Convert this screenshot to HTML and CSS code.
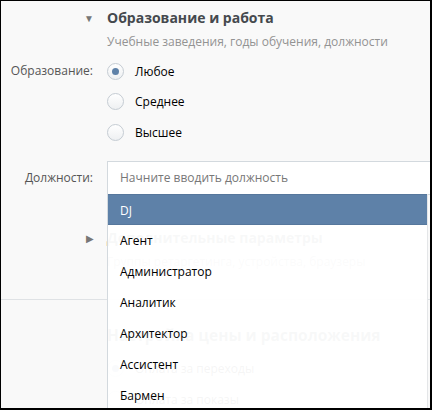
FILE: index.html
```html
<!DOCTYPE html>
<html lang="ru">
<head>
  <meta charset="UTF-8">
  <title>Образование и работа</title>
  <link rel="stylesheet" href="styles.css">
</head>
<body>
  <div class="frame">

    <div class="section">
      <div class="section-head">
        <span class="toggle">&#9660;</span>
        <div>
          <div class="section-title">Образование и работа</div>
          <div class="section-sub">Учебные заведения, годы обучения, должности</div>
        </div>
      </div>

      <div class="row row-first">
        <div class="label">Образование:</div>
        <div class="options">
          <label class="radio checked"><span class="dot"></span>Любое</label>
          <label class="radio"><span class="dot"></span>Среднее</label>
          <label class="radio"><span class="dot"></span>Высшее</label>
        </div>
      </div>

      <div class="row row-input">
        <div class="label">Должности:</div>
        <div class="field">
          <div class="input">Начните вводить должность</div>
          <ul class="dropdown">
            <li class="active">DJ</li>
            <li>Агент</li>
            <li>Администратор</li>
            <li>Аналитик</li>
            <li>Архитектор</li>
            <li>Ассистент</li>
            <li>Бармен</li>
          </ul>
        </div>
      </div>
    </div>

    <div class="section section-closed">
      <div class="section-head">
        <span class="toggle">&#9654;</span>
        <div>
          <div class="section-title">Дополнительные параметры</div>
          <div class="section-sub">Группы ретаргетинга, устройства, браузеры</div>
        </div>
      </div>
    </div>

    <div class="section section-price">
      <div class="section-head">
        <span class="toggle"></span>
        <div class="section-title big">Настройка цены и расположения</div>
      </div>
      <div class="row row-first">
        <div class="label"></div>
        <div class="options">
          <label class="radio checked"><span class="dot"></span>Оплата за переходы</label>
          <label class="radio"><span class="dot"></span>Оплата за показы</label>
        </div>
      </div>
    </div>

  </div>
</body>
</html>
```

FILE: styles.css
```css
* {
  box-sizing: border-box;
  margin: 0;
  padding: 0;
}

body {
  font-family: "Open Sans", Tahoma, sans-serif;
  font-size: 12px;
  color: #000;
  background-color: #fff;
}

.frame {
  width: 432px;
  height: 410px;
  overflow: hidden;
  background-color: #f9f9f9;
  border-top: 1px solid #000;
  border-left: 1px solid #000;
  border-right: 2px solid #000;
  border-bottom: 2px solid #000;
}

.section-head {
  display: flex;
  align-items: flex-start;
  padding-top: 7px;
}

.toggle {
  width: 106px;
  flex-shrink: 0;
  padding-right: 13px;
  text-align: right;
  font-size: 10px;
  line-height: 20px;
  color: #777;
}

.section-title {
  font-size: 14px;
  font-weight: bold;
  line-height: 20px;
  color: #45494e;
}

.section-title.big {
  font-size: 15.5px;
}

.section-sub {
  margin-top: 5px;
  color: #939393;
  line-height: 18px;
}

.row {
  display: flex;
  align-items: flex-start;
}

.row-first {
  margin-top: 5px;
}

.label {
  width: 106px;
  flex-shrink: 0;
  padding-right: 14px;
  text-align: right;
  color: #555;
  line-height: 30px;
}

.options {
  display: flex;
  flex-direction: column;
}

.radio {
  display: flex;
  align-items: center;
  height: 30.5px;
}

.dot {
  width: 17px;
  height: 17px;
  margin-right: 11px;
  border: 1px solid #c5ccd3;
  border-radius: 50%;
  background: linear-gradient(#fff, #eef0f2);
  display: flex;
  align-items: center;
  justify-content: center;
}

.radio.checked .dot::after {
  content: "";
  width: 7px;
  height: 7px;
  border-radius: 50%;
  background-color: #5e81a8;
}

.row-input {
  margin-top: 13px;
}

.row-input .label {
  line-height: 33px;
}

.field {
  position: relative;
  flex: 1;
}

.input {
  height: 34px;
  line-height: 32px;
  padding-left: 12px;
  background-color: #fff;
  border: 1px solid #d3d9de;
  border-right: none;
  color: #777;
}

.dropdown {
  position: absolute;
  top: 33px;
  left: 0;
  right: 2px;
  z-index: 10;
  list-style: none;
  background-color: rgba(255, 255, 255, 0.96);
  border-left: 1px solid #d3d9de;
  border-right: 1px solid #e4e6e8;
}

.dropdown li {
  height: 31px;
  line-height: 31px;
  padding-left: 12px;
}

.dropdown li.active {
  background-color: #5e81a8;
  color: #fff;
  border-top: 1px solid #56779c;
  border-bottom: 1px solid #56779c;
}

.section-closed {
  margin-top: 26px;
  padding-bottom: 28px;
  border-bottom: 1px solid #dfe2e5;
}

.section-price .section-head {
  padding-top: 25px;
}

.section-price .row-first {
  margin-top: 9px;
}
```
